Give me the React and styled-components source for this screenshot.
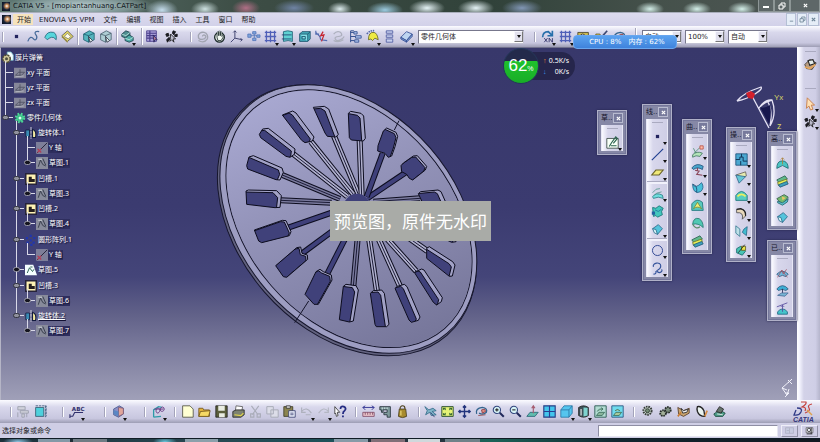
import React from 'react';
import styled, { createGlobalStyle, css } from 'styled-components';

const Global = createGlobalStyle`
  * { box-sizing: border-box; }
  body { margin: 0; font: 7px/10px "DejaVu Sans", "Noto Sans CJK SC", sans-serif; color: #1c1c26; }
  button, input, select { font: inherit; color: inherit; margin: 0; padding: 0; border: 0; background: none; }
  ul { list-style: none; margin: 0; padding: 0; }
`;

/* ---------- small drawings, all on a 16 x 16 grid ---------- */
const N = '#23245e';
const shapes = {
  point: <rect x="6" y="6" width="4" height="4" fill={N} />,
  curve: <path d="M1 14C3 8 6 8 8 11s6-1 3-5 1-5 4-4" fill="none" stroke="#456999" strokeWidth="1.5" />,
  surface: <path d="M1 9Q4 1 12 3q4 2 3 9-3-4-6-3-3 1-5 3Z" fill="#58d6dc" stroke="#22657a" />,
  solid: <><path d="M1 7 8 1l7 7-7 6Z" fill="#e9dc5e" stroke="#555" /><path d="m4 8 4-4 4 4-3 3Z" fill="#fffbe5" stroke="#777" /><path d="m1 7 7 7v2L1 9Z" fill="#9a8a3d" /></>,
  cube: <><path d="M2 5 9 1l6 3v8l-7 3-6-3Z" fill="#55b4bd" stroke="#1c5f70" /><path d="m2 5 6 2 7-3M8 7v8" fill="none" stroke="#1c5f70" /><path d="m8 8 5 5-3 2Z" fill="#e8f8f6" stroke="#334" /></>,
  cubeGrey: <><path d="M2 5 9 1l6 3v8l-7 3-6-3Z" fill="#aecdd4" stroke="#49606e" /><path d="m2 5 6 2 7-3M8 7v8" fill="none" stroke="#49606e" /><path d="m8 8 5 5-3 2Z" fill="#e8f8f6" stroke="#334" /></>,
  cubes: <><path d="m1 5 5-4 5 2v5l-5 2-5-2Z" fill="#508f91" stroke="#173c49" /><path d="m5 10 5-4 5 3v4l-5 2-5-2Z" fill="#4eaaa5" stroke="#173c49" /><path d="m1 5 5 2 5-4M5 10l5 2 5-3" fill="none" stroke="#bde5df" /></>,
  table: <><path d="M2 1h12v13H2Z" fill="#a99fd8" stroke="#4a3f8b" /><path d="M2 4h12M2 7h12M2 10h12M6 1v13" stroke="#4a3f8b" strokeWidth="1.5" /><path d="m10 6 5 6-3 0-1 3Z" fill="#c07f96" stroke={N} /></>,
  pointer: <><path d="m7 5 6 6-3 0 1 4-3-3-2 2Z" fill="#bbc" stroke="#111" /><path d="M1 5l3-1 1 3-3 1ZM10 1l3 1-2 4-2-2ZM2 12l3-3 1 2-3 4ZM12 6l3-1v3h-3Z" fill="#1c1c28" stroke="#111" /></>,
  swirl: <path d="M8 8c0-3 5-2 4 1s-8 4-9 0S6 2 10 3s5 5 4 8M3 13c5 3 9 1 11-2" fill="none" stroke="#a1a4b0" strokeWidth="1.6" />,
  hand: <><circle cx="8" cy="9" r="6" fill="#e7eee8" stroke="#1b2a2a" strokeWidth="1.6" /><path d="M5 9V3q1-2 2 0v4-5q1-2 2 0v5-4q1-2 2 0v5l2-2q1 0 0 2l-3 5H6Z" fill="#f4faf4" stroke="#1b2a2a" /></>,
  axis: <path d="M6 1v9l9 2M6 10l-5 5M4 3l2-2 2 2M13 10l2 2-2 2" fill="none" stroke="#414470" strokeWidth="1.2" />,
  nodes: <path d="M1 5h4v4H1Zm6-3h4v3H7Zm0 8h4v3H7Zm5-4h4v3h-4ZM5 7h7M9 5v5" fill="#7fa4dc" stroke="#5275b7" />,
  grid: <path d="M3 1v14M8 1v14M13 1v14M1 3h14M1 8h14M1 13h14" stroke="#5060b8" strokeWidth="1.6" />,
  box: <><path d="M3 2q5-2 11 0v12q-5-2-11 0Z" fill="#5fd0d2" stroke="#1c5e73" /><path d="M1 6h12M1 11h12" stroke="#1d3f70" /></>,
  box3d: <><path d="M2 5 5 2h10v9l-3 3H2Z" fill="#46aebd" stroke="#174c66" /><path d="M2 5h10v9M12 5l3-3M5 8h4v3H5Z" fill="#83dfe6" stroke="#174c66" /></>,
  snap: <><path d="m1 3 5 5 1 4 8 1M1 1v4h4" fill="none" stroke="#536bb0" strokeWidth="1.4" /><path d="m10 2-3 5 4-1-3 8" fill="none" stroke="#c5222d" strokeWidth="1.5" /></>,
  ghost: <path d="M2 5c5-6 10-2 10 1S2 7 4 11s9 1 11-3M2 13c5 3 9 1 12-1" fill="none" stroke="#adb0bd" strokeWidth="1.5" />,
  treeIcon: <><path d="M2 1v14M2 3h4m-4 5h6m-6 5h5M2 1h4" stroke="#334f8f" strokeWidth="1.2" /><path d="M6 2h4v3H6Zm2 5h7v3H8Zm-1 5h5v3H7Z" fill="#a9bde9" stroke="#334f8f" /></>,
  bell: <><path d="M3 12Q3 2 10 3q4 1 5 9l-4-2-3 3-2-2Z" fill="#eeea42" stroke="#64641e" /><path d="M1 5q4-5 9-4" fill="none" stroke="#4f65a6" strokeWidth="2" strokeDasharray="2 1" /></>,
  stack: <path d="M4 1h8v3H4Zm0 5h8v3H4Zm0 5h8v4H4Z" fill="#c8d0ee" stroke="#4a589e" />,
  eraser: <><path d="m1 9 7-7 7 3-7 8Z" fill="#bdd4f0" stroke="#344c92" /><path d="m1 9 7 4v2L1 11Zm7 4 7-8v3l-7 7Z" fill="#7a9bd1" stroke="#344c92" /></>,
  rotXY: <><path d="M2 9q0-7 7-7l4 4m1-5v6H8" fill="none" stroke="#276faa" strokeWidth="2" /><path d="m4 10 4 5m0-5-4 5m6 0v-5l4 5v-5" stroke={N} fill="none" /></>,
  camera: <><path d="M1 3h13v10H1Z" fill="#c9b952" stroke="#443d28" /><circle cx="7" cy="8" r="3" fill="#fff" stroke="#222" /></>,
  folderPen: <><path d="M1 5h5l1 2h7v7H1Z" fill="#e8d257" stroke="#59501f" /><path d="m15 1-8 9" stroke="#3c4772" strokeWidth="2" /></>,
  sketch: <><path d="M1 3h14v12H1Z" fill="#f7fff7" stroke="#31433c" /><path d="m4 13 3-5 5-7 2 2-5 6M6 12h7" fill="none" stroke="#2a624d" strokeWidth="1.4" /></>,
  line: <path d="M1 15 15 1" stroke="#203f91" strokeWidth="1.4" />,
  plane: <path d="m1 11 5-6h9l-5 6Z" fill="#f0e878" stroke="#6b642b" strokeWidth="1.3" />,
  sweep: <><path d="M2 12q4-6 12-2l1 4q-6-3-12 0Z" fill="#6fdede" stroke="#287c85" /><path d="M2 7q4-6 9-5M4 10q2-3 9-4" fill="none" stroke="#53968d" /></>,
  patch: <><path d="m2 3 4 1 4-3 5 3-2 4 1 4-6 3-2-2-3 1Z" fill="#42c7bd" stroke="#146e70" /><path d="m5 6 4 2 4-3" fill="none" stroke="#226aa1" /><path d="M1 8h4v4H1Z" fill="#2262a2" /></>,
  fold: <><path d="m2 7 7-5 5 5-6 7Z" fill="#55c4dc" stroke="#286687" /><path d="m2 7 4 1 2 6-4-2Z" fill="#d6f6f8" stroke="#286687" /></>,
  circle: <circle cx="8" cy="8" r="6.2" fill="none" stroke="#334a94" strokeWidth="1.2" />,
  spiral: <path d="M3 6c-2-5 9-7 9-1S5 9 8 12s7-1 5-3M3 15q4 0 3-4" fill="none" stroke="#34539b" strokeWidth="1.4" />,
  extrude: <><path d="M2 12q5-5 12-2l-3 4q-5-2-9 1Z" fill="#b2e4b8" stroke="#417460" /><path d="m4 10 7-7M3 4l3 6" stroke="#4b8c6f" fill="none" /><path d="M11 1h4v4h-4Z" fill="#ffbba9" stroke="#b85044" /></>,
  revolve: <><path d="M1 6Q7-1 15 4l-1 4Q8 4 3 8Z" fill="#4aa6cc" stroke="#214f7a" /><path d="m5 9 5 1-3 4 7 1M8 6v4" fill="none" stroke="#8b4659" strokeWidth="1.3" /></>,
  bowl: <><path d="M2 4q4 6 11-2 4 6-1 11-5 3-8-1Q2 9 2 4Z" fill="#49bfd9" stroke="#215f88" /><path d="M2 4q6 1 5 10" fill="none" stroke="#1b456c" /></>,
  offset: <><path d="M1 14V6q6-8 13-2l1 10Z" fill="#59c9bd" stroke="#197177" /><path d="m3 12 5-8 5 8q-5-4-10 0Z" fill="#f1ed75" stroke="#71863a" /></>,
  dome: <><path d="M2 9q1-9 8-7 5 3 5 11-6-6-13-4Z" fill="#50c8b3" stroke="#24766e" /><path d="M2 9q4 7 9 3" fill="none" stroke="#5a8a68" strokeWidth="1.5" /></>,
  layers: <><path d="m1 6 10-5 3 4-10 5Z" fill="#62b98c" stroke="#285f4d" /><path d="m2 9 11-4 1 4-11 4Z" fill="#e9ee55" stroke="#68702b" /><path d="m3 12 10-4 2 3-10 4Z" fill="#3fa1be" stroke="#1f5878" /></>,
  join: <><path d="M1 1h14v14H1Z" fill="#4aa7d0" stroke="#1a4f78" /><path d="M1 8h5V5h4v5h5M8 1v4M7 10v5" fill="none" stroke="#123658" strokeWidth="1.2" /></>,
  split: <><path d="m1 5 12-4 1 5-8 4Z" fill="#e5eab0" stroke="#635e57" /><path d="M1 5 13 7l-8 8Z" fill="#66c6d5" stroke="#32658d" /></>,
  boundary: <><path d="M1 14V8q7-10 14 0v6Z" fill="#57cdbf" stroke="#197177" /><path d="M3 9q5-5 10 0" fill="none" stroke="#ecee5e" strokeWidth="2" /></>,
  fillet: <><path d="M2 3Q13 0 13 11l-4 4Q11 6 2 7Z" fill="#e8d8bb" stroke="#49494c" /><path d="m2 3 5-1q7 2 6 9" fill="none" stroke="#222" strokeWidth="1.5" /></>,
  mirror: <><path d="m1 10 5 4V5L1 1Z" fill="#bde0e7" stroke="#377990" /><path d="m9 9 5 4 1-11-4 3Z" fill="#43bdd0" stroke="#276788" /></>,
  extrap: <><path d="m2 7 5-3 6 6-4 5-7-3Z" fill="#49c4b4" stroke="#13686b" /><path d="M8 4h5v5H8Z" fill="#eae44a" stroke="#5d5b20" /><path d="m4 12 8-10" stroke="#222" /></>,
  bridge: <><path d="M1 14q0-8 5-9h4q5 2 5 9l-4-2q-3-3-6 0Z" fill="#4bc4c3" stroke="#1c676f" /><path d="M8 1v8M6 3l2-2 2 2" stroke="#a9803a" fill="none" /></>,
  wrap: <><path d="m1 7 9-5 5 3-7 9Z" fill="#76bb70" stroke="#315b43" /><path d="m2 10 6 2 7-5-1 4-6 4-6-3Z" fill="#59bfc9" stroke="#24636f" /><path d="m7 4 5 2-4 3Z" fill="#e9c466" /></>,
  hair: <><path d="M1 10q7-7 14 0l-3 3q-4-3-8 0Z" fill="#6fbce0" stroke="#2b557c" /><path d="m2 14 5-9 2 5 4-6M7 5l7 9" fill="none" stroke="#9f5868" /></>,
  umbrella: <><path d="M1 6q7-8 14 0l-3 2q-4-3-9 0Z" fill="#3cadd4" stroke="#28587b" /><path d="M8 6v7" stroke="#202850" /><path d="m2 14 5-3h8l-4 4Z" fill="#77b5d4" stroke="#486b96" /></>,
  lift: <><path d="M2 12q6-7 12 0v3H2Z" fill="#46c4cb" stroke="#1e6682" /><path d="m1 6 13-5M8 4v8M6 6l2-2 2 2" fill="none" stroke="#52489b" /></>,
  draft: <path d="M1 2h9v4H1Zm3 5h10v3H4Zm2 4h3v4H6ZM1 9v6M12 10v5" fill="#d0d1db" stroke="#999caa" />,
  frame: <><path d="M2 3h10v11H2Z" fill="#4ed0dc" stroke="#32566c" /><path d="M2 1h13v13M14 1v14" stroke="#365478" fill="none" strokeDasharray="3 1" /></>,
  analysis: <><path d="m2 5 7-4 5 3v7l-6 4-6-3Z" fill="#8c8fc5" stroke="#46598e" /><path d="m8 3 6 1v7l-6 3Z" fill="#e1a59a" stroke="#7e5a77" /><path d="m2 6 6 2v6l-6-3Z" fill="#5a87c4" /></>,
  constr: <><path d="M2 15V6l6-4 4 1M2 15l9-1" fill="none" stroke="#2d9ba8" strokeWidth="1.6" /><path d="M5 7c0-4 4-4 5-1s5 2 5-1-4-4-5 1-5 5-5 1M3 5h11" fill="none" stroke="#683a84" strokeWidth="1.2" /></>,
  file: <path d="M2 1h9l4 4v10H2Z" fill="#ffffd3" stroke="#4b4c3c" />,
  folder: <><path d="M1 4h5l1 2h7v8H1Z" fill="#e4b23b" stroke="#6c5119" /><path d="m3 8 12-1-2 7H1Z" fill="#f6d964" stroke="#6c5119" /></>,
  save: <><path d="M1 1h14v14H1Z" fill="#5b5e3c" stroke="#222" /><path d="M4 1h8v6H4Zm1 9h7v5H5Z" fill="#e9ece2" /></>,
  print: <><path d="m5 1 8 1-1 6H4Z" fill="#fff" stroke="#555" /><path d="m1 8 4-2h10v6l-4 3H1Z" fill="#7d8272" stroke="#222" /><path d="m3 12 8 1 3-3" stroke="#e1d448" fill="none" strokeWidth="1.5" /></>,
  cut: <path d="m3 1 8 11M12 1 4 12M2 11h4v4H2Zm8 0h4v4h-4Z" fill="none" stroke="#a9acb8" strokeWidth="1.4" />,
  copy: <path d="M1 2h8v9H1Zm5 4h9v9H6Z" fill="#dcdde8" stroke="#a9acb8" strokeWidth="1.2" />,
  paste: <><path d="M1 2h11v12H1Z" fill="#8b8450" stroke="#3a3924" /><path d="M4 1h5v3H4Z" fill="#ddd" stroke="#333" /><path d="M7 7h8v8H7Z" fill="#eff3ff" stroke="#353c6c" /><path d="M9 10h4m-4 2h4" stroke="#353c6c" /></>,
  undo: <path d="M2 8q6-7 12 2M2 3v6h5M7 12h6" fill="none" stroke="#aeb1bd" strokeWidth="1.4" />,
  redo: <path d="M14 8Q8 1 2 10m12-7v6H9" fill="none" stroke="#b4b7c3" strokeWidth="1.4" />,
  help: <><path d="m1 2 6 7H4l1 4-2 1-1-4-1 1Z" fill="#fff" stroke="#333" /><path d="M8 5q0-4 4-3 4 2 1 5-2 1-2 4m0 2v2" fill="none" stroke="#252c83" strokeWidth="2.2" /></>,
  measure: <><path d="M1 3h14M4 1 1 3l3 3M12 1l3 2-3 3" fill="none" stroke="#3a3c96" strokeWidth="1.2" /><path d="M1 9h14v5H1Z" fill="#eac4ca" stroke="#7c4862" /><path d="M4 9v3m3-3v3m3-3v3m3-3v3" stroke="#7c4862" /></>,
  caliper: <><path d="M1 2h13v13h-4v-3H6V9h4V6H5v3H3V6H1Z" fill="#7f9b9c" stroke="#222d36" /><path d="M4 3v2M7 3v2M10 3v2" stroke="#e8f0f0" /></>,
  weight: <><circle cx="8" cy="4" r="3" fill="none" stroke="#4a3e18" strokeWidth="1.3" /><path d="M4 5h8l1 9q-5 3-10 0Z" fill="#a88b2e" stroke="#453b1d" /><path d="M6 7v6" stroke="#ead576" strokeWidth="1.5" /></>,
  fly: <><path d="m1 2 5 4 5-2 4 3-5 1 5 4-6 1-2-4-5 3 2-5Z" fill="#7fb4c8" stroke="#2f6786" /><path d="m8 9 5 6" stroke="#303b72" /></>,
  fit: <><path d="M1 2h14v12H1Z" fill="#e5f377" stroke="#2f5433" strokeWidth="1.2" /><path d="m3 4 3 2M3 12l3-2m7-6-3 2m3 6-3-2M3 6V4h3m4 0h3v2M3 10v2h3m7-2v2h-3" fill="none" stroke="#144e25" /></>,
  pan: <path d="M8 1v14M1 8h14M6 3l2-2 2 2M6 13l2 2 2-2M3 6 1 8l2 2m10-4 2 2-2 2" fill="none" stroke="#22347c" strokeWidth="1.7" />,
  rotate: <><path d="M2 11Q0 4 9 3q7 1 5 6-4 4-9 1" fill="none" stroke="#34648d" strokeWidth="1.6" /><path d="m8 6 4-1 1 3-4 2Z" fill="#e08c83" stroke="#84373c" /><path d="m4 13 9-1" stroke="#914245" /></>,
  zoomIn: <><circle cx="6" cy="6" r="4.5" fill="#d6f3f6" stroke="#31447c" strokeWidth="1.3" /><path d="m9.5 9.500 5 5" stroke="#20295b" strokeWidth="2.4" /><path d="M4 6h4M6 4v4" stroke="#222" strokeWidth="1.3" /></>,
  zoomOut: <><circle cx="6" cy="6" r="4.5" fill="#d6f3f6" stroke="#31447c" strokeWidth="1.3" /><path d="m9.500 9.500 5 5" stroke="#20295b" strokeWidth="2.4" /><path d="M4 6h4" stroke="#222" strokeWidth="1.3" /></>,
  normal: <><path d="m1 14 4-5h10l-4 5Z" fill="#60bcae" stroke="#266374" /><path d="M9 10V2M7 4l2-3 2 3" fill="none" stroke="#a55b6e" strokeWidth="1.4" /></>,
  quad: <><path d="M1 1h14v14H1Z" fill="#43c5ed" stroke="#273e85" strokeWidth="1.4" /><path d="M8 1v14M1 8h14" stroke="#283e90" strokeWidth="1.4" /></>,
  iso: <><path d="M1 6 5 1h10v9l-4 5H1Z" fill="#55c5ee" stroke="#2875a4" /><path d="M1 6h10v9m0-9 4-5" fill="none" stroke="#2875a4" /></>,
  shade: <><path d="M2 3q6-4 12 0v10q-6 4-12 0Z" fill="#3b5057" stroke="#222" /><path d="M8 3q5 0 5 1v9l-5 1Z" fill="#7ed2ce" /><path d="M5 5v8" stroke="#eee" strokeWidth="1.4" /></>,
  swap: <><path d="M1 1h14v14H1Z" fill="#b3dcd2" stroke="#36635d" strokeWidth="1.2" /><path d="m3 13 3-4h7l-3 4ZM4 8q2-4 7-3M9 3l2 2-2 2" fill="#8ab59c" stroke="#356a58" /></>,
  swapBlue: <><path d="M1 1h14v14H1Z" fill="#70dbed" stroke="#36638d" strokeWidth="1.2" /><path d="m3 13 3-4h7l-3 4ZM5 7q3-3 6 0" fill="#a8c99b" stroke="#356a58" /></>,
  gear: <><circle cx="8" cy="7" r="5" fill="#cddbd1" stroke="#363c38" strokeWidth="2.4" strokeDasharray="2 1" /><circle cx="8" cy="7" r="2.500" fill="#718b74" stroke="#252d28" /></>,
  gears: <><circle cx="5" cy="10" r="3.500" fill="#a3b09a" stroke="#252c29" strokeWidth="2.200" strokeDasharray="2 1" /><circle cx="11" cy="6" r="3.500" fill="#7b8c7c" stroke="#252c29" strokeWidth="2.200" strokeDasharray="2 1" /></>,
  book: <><path d="m1 3 7 4 7-3v6l-7 4-6-3Z" fill="#c9a46f" stroke="#533a24" /><path d="m5 4 3 3 6-2-2 4-5 1Z" fill="#eee" stroke="#222" /><path d="m1 14 4-5" stroke="#c77c31" strokeWidth="2" /></>,
  lens: <><path d="M3 2q5-1 8 5l1 7q-7 0-9-6-1-4 0-6Z" fill="#eaf2ef" stroke="#222" strokeWidth="1.6" /><path d="m12 14 3-7" stroke="#d58c42" strokeWidth="2" /></>,
  teal: <><path d="M1 11q7-6 14-1l-3 4H3Z" fill="#4f9f8a" stroke="#174437" /><path d="M4 8 8 2l5 3-3 5Z" fill="#66736b" stroke="#222" /><path d="m5 11 7 1" stroke="#eee" /></>,
  wbench: <><path d="m1 8 6-6 8 4-5 8-7-1Z" fill="#b99d83" stroke="#34302e" /><path d="m5 3 6-1 2 5-6 2Z" fill="#e5ece9" stroke="#222" strokeWidth="1.3" /><path d="m1 11 6 2 7-5" fill="none" stroke="#e5a65d" strokeWidth="2" /></>,
  select: <path d="m4 1 9 9H9l2 5-3 1-2-5-3 3Z" fill="#ffe1b5" stroke="#c98350" strokeWidth="1.2" />,
  partRoot: <><path d="M7 0h5l3 4v7H7Z" fill="#f6ffff" stroke="#7fc5d0" /><circle cx="6" cy="9" r="5" fill="#cfc79b" stroke="#4f4c35" strokeWidth="2" strokeDasharray="3 1" /><circle cx="6" cy="9" r="2" fill="#51503f" /></>,
  datum: <><path d="M0 1h16v14H0Z" fill="#868799" /><path d="m2 11 4-4h8l-4 4ZM8 3v9" fill="none" stroke="#484b5c" /><path d="m2 13 11-1" stroke="#bec0c8" /></>,
  axisDim: <><path d="M0 0h16v16H0Z" fill="#7d7e99" /><path d="M1 15 15 1" stroke="#26263c" strokeWidth="1.3" /><path d="m2 9 5 5m0-5-5 5" stroke="#b03f58" strokeWidth="1.5" /></>,
  sketchDim: <><path d="M0 0h16v16H0Z" fill="#888b9b" /><path d="m3 13 3-9 3 6 4 2M9 2l4 9" fill="none" stroke="#323947" strokeWidth="1.2" /><path d="M3 3h5" stroke="#dce4e5" /></>,
  sketchOn: <><path d="M0 1h11l5 14H0Z" fill="#f5ffff" /><path d="m3 12 3-7 4 5 2-3M7 4h3" fill="none" stroke="#1f5748" strokeWidth="1.2" /></>,
  pocket: <><path d="M1 1h14v14H1Z" fill="#fff3b3" stroke="#26233a" strokeWidth="2" /><path d="M5 5h4v3h4v4H5Z" fill="#241e1e" /></>,
  shaft: <><path d="M1 4h5v9H1Z" fill="#3a8bb3" stroke="#111a3d" /><path d="M8 0v16" stroke="#fff" strokeDasharray="4 1" /><path d="M10 3q6 2 4 11h-4Z" fill="#f2e9a0" stroke="#111a3d" strokeWidth="1.5" /></>,
  body: <><circle cx="8" cy="8" r="5" fill="#33ba83" stroke="#4fd596" strokeWidth="4" strokeDasharray="2 2" /><circle cx="8" cy="8" r="2" fill="#d9fff0" /></>,
  pattern: <path d="M6 1h3v3H6ZM1 4h3v3H1Zm10 0h3v3h-3ZM2 10h3v3H2Zm8 0h3v3h-3ZM6 7h3v3H6Zm1 6h3v3H7Z" fill="#2036ae" />,
  compassWin: <><path d="M1 3h14v10H1Z" fill="#c7cbe0" stroke="#a2a5b8" /><path d="M8 4v9M3 8h4" stroke="#a2a5b8" /></>,
  power: <><path d="M2 3h12v9H2Z" fill="#e8ebf2" stroke="#333" /><circle cx="7" cy="7" r="3" fill="none" stroke="#222" strokeWidth="1.3" /><path d="M11 3v11M3 14h10" stroke="#222" strokeWidth="1.5" /></>,
};

const Svg = styled.svg`
  display: block;
  flex: none;
  overflow: visible;
  width: ${p => p.$s || 13}px;
  height: ${p => p.$s || 13}px;
`;
const Icon = ({ name, size }) => <Svg $s={size} viewBox="0 0 16 16" aria-hidden="true">{shapes[name]}</Svg>;

/* ---------- frame ---------- */
const Shell = styled.div`
  position: relative;
  min-height: 100vh;
  display: flex;
  flex-direction: column;
  overflow: hidden;
  background: #d2d1e6;
`;
const TitleBar = styled.header`
  height: 13px;
  display: flex;
  align-items: center;
  gap: 3px;
  padding-left: 2px;
  color: #10151a;
  background:
    radial-gradient(ellipse 75px 12px at 80px 6px, rgba(196,216,220,.9), rgba(150,175,178,.6) 70%, transparent),
    radial-gradient(ellipse 16px 10px at 162px 10px, #c4dcec, transparent),
    radial-gradient(ellipse 14px 8px at 205px 9px, #cfe2e2, transparent),
    radial-gradient(ellipse 14px 8px at 246px 8px, #b16f86, transparent),
    radial-gradient(ellipse 20px 8px at 294px 8px, #6f83a4, transparent),
    radial-gradient(ellipse 12px 7px at 340px 9px, #dfeef0, transparent),
    radial-gradient(ellipse 18px 8px at 385px 10px, #9ccbe0, transparent),
    radial-gradient(ellipse 18px 8px at 427px 8px, #e6f4f7, transparent),
    radial-gradient(ellipse 18px 8px at 476px 8px, #e6f4f7, transparent),
    radial-gradient(ellipse 20px 8px at 522px 8px, #8196b5, transparent),
    radial-gradient(ellipse 14px 7px at 650px 9px, #d5f0ea, transparent),
    radial-gradient(ellipse 14px 7px at 697px 9px, #d5f0ea, transparent),
    radial-gradient(ellipse 14px 7px at 742px 9px, #d5f0ea, transparent),
    linear-gradient(90deg, #5f7873, #3d4d45 30%, #31423a 60%, #45514b 80%, #4f5755);
  border-bottom: 1px solid #a9aebb;
`;
const AppBadge = styled.span`
  width: ${p => p.$w}px;
  height: 9px;
  flex: none;
  background: radial-gradient(circle at 60% 45%, #fff, #c38958 25%, #182338 55%, #070b18);
`;
const Title = styled.h1`
  margin: 0;
  flex: 1;
  font: inherit;
`;
const WinBtns = styled.div`
  display: flex;
  align-self: stretch;
  gap: ${p => p.$gap || 0}px;
`;
const WinBtn = styled.button`
  width: ${p => p.$w || 16}px;
  display: grid;
  place-items: center;
  ${p => p.$light
    ? css`color: #6d8496; background: #e5edf7; border: 1px solid #b4bfd4;`
    : css`color: #fff; background: rgba(110,120,124,.5); border: 1px solid #8d9696; border-top: 0;`}
`;
const MenuBar = styled.nav`
  height: 13px;
  display: flex;
  align-items: center;
  padding: 0 1px 0 2px;
  background: linear-gradient(#dcdbee, #d2d1e9);
`;
const Menus = styled.div`
  flex: 1;
  display: flex;
  gap: 9px;
  padding-left: 2px;
`;
const MenuItem = styled.button`
  white-space: nowrap;
  height: 11px;
  ${p => p.$on && css`background: #f5e3bd; padding: 0 2px 0 4px; margin-right: -3px;`}
`;
const bar = css`
  background: linear-gradient(#fbfbff, #d9d8ec 30%, #c8c7df 80%, #9d9db4);
`;
const Toolbar = styled.div`
  ${bar}
  height: ${p => p.$h}px;
  display: flex;
  align-items: center;
  white-space: nowrap;
`;
const Group = styled.div`
  display: flex;
  align-items: center;
  flex: none;
  margin-left: ${p => p.$ml || 0}px;
`;
const Sep = styled.span`
  width: 2px;
  height: ${p => p.$h || 17}px;
  flex: none;
  margin-left: ${p => p.$ml || 0}px;
  border-left: 1px solid #a3a3ba;
  border-right: 1px solid #fff;
`;
const ToolBtn = styled.button`
  position: relative;
  flex: none;
  width: ${p => p.$w || 17}px;
  height: 18px;
  display: grid;
  place-items: center;
  ${p => p.$drop && css`
    &::after {
      content: '';
      position: absolute;
      right: 0;
      bottom: 0;
      border: 2px solid transparent;
      border-top: 3px solid #111;
      border-bottom: 0;
    }
  `}
`;
const Tool = ({ n, w }) => {
  const drop = n.endsWith('+');
  const name = drop ? n.slice(0, -1) : n;
  return <ToolBtn type="button" $w={w} $drop={drop} aria-label={name}><Icon name={name} /></ToolBtn>;
};
const Tools = ({ items, ml, w }) => (
  <Group $ml={ml}>{items.split(' ').map((n, i) => <Tool key={i} n={n} w={w} />)}</Group>
);

const Combo = styled.label`
  display: flex;
  align-items: center;
  flex: none;
  width: ${p => p.$w}px;
  height: 14px;
  margin-left: ${p => p.$ml}px;
  background: #fff;
  border: 1px solid #77778c;
  border-right-color: #c3c3d4;
  border-bottom-color: #c3c3d4;
`;
const Select = styled.select`
  appearance: none;
  flex: 1;
  min-width: 0;
  padding-left: 2px;
  outline: 0;
`;
const Arrow = styled.span`
  width: 9px;
  height: 11px;
  margin-left: -9px;
  display: grid;
  place-items: center;
  pointer-events: none;
  background: #e2e1ee;
  border: 1px solid #f7f7ff;
  border-right-color: #777;
  border-bottom-color: #777;
  &::after { content: ''; border: 2px solid transparent; border-top: 3px solid #111; border-bottom: 0; }
`;
const Drop = ({ label, value, w, ml }) => (
  <Combo $w={w} $ml={ml}><Select aria-label={label}><option>{value}</option></Select><Arrow /></Combo>
);

const Middle = styled.div`
  flex: 1;
  display: flex;
  min-height: 353px;
`;
const Viewport = styled.main`
  position: relative;
  flex: 1;
  border-left: 1px solid #b5b5c6;
  border-top: 1px solid #70708c;
  background: linear-gradient(#38386b, #3b3b70 45%, #444579 65%, #626289 76%, #8282a2 88%, #a0a0b8);
`;
const SideBar = styled.aside`
  width: 23px;
  display: flex;
  flex-direction: column;
  align-items: center;
  padding: 4px 0 0 4px;
  background: linear-gradient(90deg, #fff, #f5f5ff 10%, #d3d2e8 30%, #cfcee6 80%, #b5b5cc);
`;
const Grip = styled.span`
  width: 11px;
  height: 1px;
  margin-top: ${p => p.$mt || 0}px;
  margin-bottom: ${p => p.$mb || 0}px;
  background: #aaaac0;
`;

/* ---------- specification tree ---------- */
const Tree = styled.nav`
  position: relative;
  width: 130px;
  padding-top: 2px;
  color: #fff;
  font-family: "Noto Sans", "Noto Sans CJK SC", sans-serif;
`;
const Item = styled.li`
  position: relative;
  ${p => p.$line && css`
    &:not(:last-child)::before {
      content: '';
      position: absolute;
      left: ${p.$line - 1}px;
      top: -4px;
      bottom: -7px;
      width: 1px;
      background: #d9d9e8;
    }
    &:last-child::before {
      content: '';
      position: absolute;
      left: ${p.$line - 1}px;
      top: -4px;
      height: 12px;
      width: 1px;
      background: #d9d9e8;
    }
  `}
`;
const Branch = styled.ul`
  & > ${Item}:nth-child(even) { margin-top: ${p => (p.$loose ? 1 : 0)}px; }
`;
const Row = styled.div`
  height: 15px;
  display: flex;
  align-items: center;
  padding-left: ${p => p.$pad}px;
  text-shadow: 1px 1px 1px #111133;
`;
const Joint = styled.span`
  position: relative;
  flex: none;
  width: 8px;
  height: 1px;
  margin-right: 1px;
  background: #d9d9e8;
`;
const Toggle = styled.button`
  position: absolute;
  left: -3px;
  top: -2px;
  width: 7px;
  height: 5px;
  border-radius: 3px;
  background: ${p => (p.$open ? '#8f909c' : '#15151f')};
  border: 1px solid ${p => (p.$open ? '#33343f' : '#9a9aa8')};
`;
const Name = styled.span`
  margin-left: 1px;
  white-space: nowrap;
  ${p => p.$box && css`background: #2e2e5e; padding: 0 1px; margin-left: 0;`}
  ${p => p.$active && css`text-decoration: underline;`}
`;
const pads = [1, 4, 15, 26];
const Node = ({ d = 1, icon, name, open, leaf, active, children }) => (
  <Item $line={d ? pads[d] + 1 : 0}>
    <Row $pad={pads[d]}>
      {d > 0 && <Joint>{!leaf && <Toggle type="button" $open={open} aria-label={name} />}</Joint>}
      <Icon name={icon} size={12} />
      <Name $box={d > 2} $active={active}>{name}</Name>
    </Row>
    {children && <Branch $loose={d === 1}>{children}</Branch>}
  </Item>
);

/* ---------- floating palettes ---------- */
const PaletteBox = styled.section`
  position: absolute;
  left: ${p => p.$x}px;
  top: ${p => p.$y}px;
  width: 30px;
  padding: 0 3px 3px;
  background: #8688a6;
  border: 1px solid #b0b1c8;
  box-shadow: 0 0 2px #22224a, inset 0 0 0 1px #74769a;
`;
const PaletteHead = styled.div`
  height: 14px;
  display: flex;
  align-items: center;
  justify-content: space-between;
  color: #16162a;
`;
const Close = styled.button`
  width: 10px;
  height: 10px;
  display: grid;
  place-items: center;
  border: 1px solid #b8bbd0;
  background: #777a9c;
  color: #fff;
`;
const PaletteBody = styled.div`
  display: flex;
  flex-direction: column;
  align-items: center;
  background: linear-gradient(90deg, #fafaff, #d8d7ec 30%, #cfcee5);
  border: 1px solid #e8e8f6;
  border-width: 0 1px;
  padding-top: 3px;
`;
const PaletteSep = styled.span`
  align-self: stretch;
  height: 3px;
  border-top: 1px solid #a9a9c0;
  background: #f1f1fb;
`;
const Cross = () => <Svg $s={5} viewBox="0 0 6 6" aria-hidden="true"><path d="m1 1 4 4m0-4L1 5" stroke="currentColor" strokeWidth="1.4" /></Svg>;
const Palette = ({ x, y, title, items }) => (
  <PaletteBox $x={x} $y={y}>
    <PaletteHead>{title}<Close type="button" aria-label="close"><Cross /></Close></PaletteHead>
    <PaletteBody>
      <Grip $mb={4} />
      {items.split(' ').map((n, i) => (n === '|' ? <PaletteSep key={i} /> : <Tool key={i} n={n} w={20} />))}
    </PaletteBody>
  </PaletteBox>
);

/* ---------- model ---------- */
const Part = styled.svg`
  position: absolute;
  left: 209px;
  top: 27px;
  width: 280px;
  height: 290px;
`;
const slots = [
  { b: '310,97 343,94 356,102 385,178 378,186 352,184 345,174', n: [372, 183, 445, 358] },
  { b: '217,120 248,108 258,114 312,186 307,198 285,203 275,196', n: [303, 200, 430, 358] },
  { b: '148,178 158,162 175,160 255,222 253,238 240,247 228,244 152,188', n: [250, 237, 412, 364] },
  { b: '110,272 117,246 130,242 216,279 220,292 210,315 198,314 113,282', n: [217, 300, 390, 372], k: 'dark' },
  { b: '108,348 115,345 200,347 214,362 210,397 195,398 110,388', n: [213, 376, 365, 383], k: 'dark' },
  { b: '133,465 217,436 228,437 243,470 238,482 155,503 146,498', n: [235, 458, 365, 413], k: 'blue' },
  { b: '197,572 260,518 272,516 276,535 292,540 293,553 230,607 220,605', n: [278, 534, 365, 470], k: 'blue' },
  { b: '318,590 330,583 340,590 364,600 366,615 325,688 312,688 285,658', n: [353, 594, 405, 492], k: 'blue' },
  { b: '400,634 408,628 438,632 445,645 430,738 418,741 388,734', n: [430, 634, 443, 490], k: 'dark' },
  { b: '481,655 490,647 515,645 523,655 537,748 530,755 499,755 495,748', n: [501, 650, 477, 490] },
  { b: '555,640 562,634 583,628 591,635 630,726 625,736 604,742 597,735', n: [570, 634, 505, 490] },
  { b: '613,592 635,582 642,585 697,668 694,680 680,690 670,682', n: [618, 588, 530, 490] },
  { b: '650,520 658,515 728,560 735,570 727,603 718,604 650,550', n: [652, 528, 595, 488] },
  { b: '660,440 700,430 742,480 738,500 725,502 700,490', n: [665, 450, 500, 420] },
  { b: '625,356 632,350 684,345 693,350 710,388 640,388', n: [630, 370, 490, 380], k: 'dark' },
  { b: '573,272 580,264 610,243 622,242 650,274 646,285 608,315 598,310 590,298 575,290', n: [588, 292, 472, 370], k: 'blue' },
  { b: '520,168 530,159 558,172 563,184 555,215 545,243 535,247 525,235 503,228 504,212', n: [518, 235, 470, 365], k: 'blue' },
  { b: '415,115 422,109 453,115 461,123 466,190 460,198 424,195 418,188', n: [449, 197, 455, 362] },
];
const Disc = () => (
  <Part viewBox="0 0 840 870" aria-hidden="true">
    <defs>
      <linearGradient id="face" x1="0" y1="0.300" x2="1" y2="0.500">
        <stop offset="0" stopColor="#a9a9d2" /><stop offset=".4" stopColor="#9494ba" /><stop offset="1" stopColor="#77779b" />
      </linearGradient>
      {slots.map((s, i) => <clipPath key={i} id={`slot${i}`}><polygon points={s.b} /></clipPath>)}
    </defs>
    <g stroke="#16162c" strokeWidth="3">
      <ellipse cx="411" cy="436" rx="457" ry="328" fill="#62627f" transform="rotate(49 411 436)" />
      <ellipse cx="415" cy="432" rx="453" ry="325" fill="#9d9dc2" transform="rotate(49 415 432)" />
      <ellipse cx="417" cy="431" rx="437" ry="308" fill="#8a8aae" transform="rotate(49 417 431)" />
    </g>
    <ellipse cx="417" cy="431" rx="435" ry="306" fill="url(#face)" transform="rotate(49 417 431)" />
    <path d="m567 137-14 28M296 678l-42 65" stroke="#14142a" strokeWidth="3" />
    {slots.map(({ n: [x1, y1, x2, y2], k }, i) => (
      <g key={i} fill="none">
        <path d={`M${x1} ${y1}L${x2} ${y2}`} stroke="#0c0c1e" strokeWidth="18" />
        <path d={`M${x1} ${y1}L${x2} ${y2}`} stroke={k === 'blue' ? '#3f407a' : k === 'dark' ? '#7a7a9e' : '#b0b0ce'} strokeWidth="12" />
        {k !== 'blue' && <path d={`M${x1} ${y1}L${x2} ${y2}`} stroke="#1b1b36" strokeWidth="3" />}
      </g>
    ))}
    <ellipse cx="441" cy="402" rx="42" ry="46" fill="#3e3f79" />
    {slots.map((s, i) => (
      <g key={i} strokeLinejoin="round">
        <g clipPath={`url(#slot${i})`}>
          <polygon points={s.b} fill="#a2a2c6" />
          <polygon points={s.b} fill="#40417a" stroke="#0c0c1e" strokeWidth="3" transform={s.k === 'blue' ? 'translate(-5 4)' : 'translate(-11 6)'} />
        </g>
        <polygon points={s.b} fill="none" stroke="#0c0c1e" strokeWidth="3" />
      </g>
    ))}
  </Part>
);
const Watermark = styled.p`
  position: absolute;
  left: 329px;
  top: 153px;
  width: 161px;
  height: 40px;
  margin: 0;
  padding-left: 4px;
  overflow: hidden;
  white-space: nowrap;
  background: #a9aba7;
  color: #fff;
  font: 17px/40px "Noto Sans CJK SC", sans-serif;
`;
const Compass = styled.svg`
  position: absolute;
  left: 734px;
  top: 37px;
  width: 52px;
  height: 46px;
  font: 9px "Liberation Sans", sans-serif;
`;
const MiniAxis = styled.svg`
  position: absolute;
  right: 3px;
  bottom: 2px;
  width: 14px;
  height: 20px;
`;
const NetWidget = styled.div`
  position: absolute;
  left: 502px;
  top: 0;
  display: flex;
  align-items: center;
  color: #fff;
  font-family: "Noto Sans", sans-serif;
`;
const Dial = styled.div`
  z-index: 1;
  width: 36px;
  height: 36px;
  border-radius: 50%;
  border: 1px solid #24385a;
  display: flex;
  align-items: baseline;
  justify-content: center;
  font: 17px/34px "Liberation Sans", sans-serif;
  background: linear-gradient(#232a4b 34%, #1fc22c 35%, #18ad27);
`;
const Percent = styled.small`font-size: 7px;`;
const Rates = styled.div`
  width: 54px;
  height: 28px;
  margin-left: -18px;
  padding: 3px 6px 0 22px;
  border-radius: 0 14px 14px 0;
  background: #26264c;
`;
const Rate = styled.div`
  display: flex;
  justify-content: space-between;
  line-height: 11px;
`;
const Dir = styled.span`color: ${p => (p.$up ? '#f08a3c' : '#3c9cf0')};`;
const CpuBadge = styled.div`
  position: absolute;
  left: 573px;
  top: 35px;
  width: 104px;
  height: 14px;
  padding-left: 4px;
  display: flex;
  align-items: center;
  justify-content: center;
  gap: 7px;
  border-radius: 4px;
  border: 1px solid #69a6ee;
  background: linear-gradient(#5ba2f0, #3f83dc);
  color: #fff;
`;

/* ---------- bottom ---------- */
const Spacer = styled.span`flex: 1;`;
const Logo = styled.svg`
  width: 28px;
  height: 22px;
  flex: none;
  font: italic bold 7px "Liberation Sans", sans-serif;
`;
const Status = styled.footer`
  height: 15px;
  display: flex;
  align-items: center;
  gap: 3px;
  padding: 0 2px;
  background: #cfcee5;
`;
const StatusText = styled.span`flex: 1;`;
const Command = styled.input`
  width: 22%;
  height: 12px;
  background: #fff;
  border: 1px solid #8e8ea4;
  border-right-color: #e7e7f1;
  border-bottom-color: #e7e7f1;
`;
const StatusBtn = styled.button`
  width: 17px;
  height: 12px;
  display: grid;
  place-items: center;
  border: 1px solid #eeeef8;
  border-right-color: #9090a5;
  border-bottom-color: #9090a5;
`;
const TaskBar = styled.div`
  height: 4px;
  border-top: 1px solid #101c25;
  background:
    linear-gradient(90deg, transparent 38px, #8399a7 38px 70px, #1e2d36 70px 73px, #6f7c84 73px 107px, transparent 107px 185px, #8ba0ab 185px 218px, transparent 218px 334px, #879ba8 334px 368px, #263540 368px 371px, #806f78 371px 405px, #263540 405px 408px, #cfd8dc 408px 440px, #263540 440px 445px, #6f8289 445px 480px, transparent 480px),
    radial-gradient(ellipse 15px 5px at 18px 3px, #8fc8e6, transparent),
    radial-gradient(ellipse 12px 5px at 165px 3px, #6ac9df, transparent),
    linear-gradient(90deg, #1c303a, #284852 25%, #1b545b 45%, #1b6257 60%, #132630 75%, #111820);
`;

export default function App() {
  return (
    <Shell>
      <Global />
      <TitleBar>
        <AppBadge $w={8} />
        <Title>CATIA V5 - [mopiantanhuang.CATPart]</Title>
        <WinBtns>
          <WinBtn type="button" aria-label="minimize"><Svg $s={6} viewBox="0 0 6 6"><path d="M0 4h6" stroke="currentColor" strokeWidth="2" /></Svg></WinBtn>
          <WinBtn type="button" aria-label="restore"><Svg $s={6} viewBox="0 0 6 6"><path d="M2 2V0h4v4H4M0 2h4v4H0Z" fill="none" stroke="currentColor" /></Svg></WinBtn>
          <WinBtn type="button" $w={30} aria-label="close"><Cross /></WinBtn>
        </WinBtns>
      </TitleBar>
      <MenuBar>
        <AppBadge $w={9} />
        <Menus>
          <MenuItem $on>开始</MenuItem>
          {['ENOVIA V5 VPM', '文件', '编辑', '视图', '插入', '工具', '窗口', '帮助'].map(m => <MenuItem key={m}>{m}</MenuItem>)}
        </Menus>
        <WinBtns $gap={1}>
          <WinBtn type="button" $light $w={10} aria-label="minimize part"><Svg $s={5} viewBox="0 0 6 6"><path d="M1 5h4" stroke="currentColor" /></Svg></WinBtn>
          <WinBtn type="button" $light $w={10} aria-label="restore part"><Svg $s={5} viewBox="0 0 6 6"><path d="M2 2V0h4v4H4M0 2h4v4H0Z" fill="none" stroke="currentColor" /></Svg></WinBtn>
          <WinBtn type="button" $light $w={11} aria-label="close part"><Cross /></WinBtn>
        </WinBtns>
      </MenuBar>
      <Toolbar $h={21}>
        <Sep $ml={2} $h={10} />
        <Tools ml={4} items="point curve surface solid" />
        <Sep $ml={1} /><Tools ml={1} items="cube cubeGrey" />
        <Sep $ml={2} /><Tools ml={1} items="cubes+" />
        <Sep $ml={5} /><Tools items="table" /><Tools ml={3} items="pointer" />
        <Sep $ml={10} $h={10} />
        <Tools ml={2} items="swirl hand axis nodes grid+ box+ box3d snap ghost treeIcon bell+ stack eraser+" />
        <Drop label="body" value="零件几何体" w={106} ml={3} />
        <Sep $ml={10} $h={10} />
        <Tools ml={2} w={18} items="rotXY+ grid+ camera folderPen rotate" />
        <Sep $ml={7} />
        <Drop label="color" value="自动" w={40} ml={5} />
        <Drop label="opacity" value="100%" w={40} ml={3} />
        <Drop label="line weight" value="自动" w={40} ml={3} />
      </Toolbar>
      <Middle>
        <Viewport>
          <Disc />
          <Tree>
            <Branch>
              <Node d={0} icon="partRoot" name="膜片弹簧">
                <Node leaf icon="datum" name="xy 平面" />
                <Node leaf icon="datum" name="yz 平面" />
                <Node leaf icon="datum" name="zx 平面" />
                <Node open icon="body" name="零件几何体">
                  <Node d={2} open icon="shaft" name="旋转体.1">
                    <Node d={3} leaf icon="axisDim" name="Y 轴" />
                    <Node d={3} icon="sketchDim" name="草图.1" />
                  </Node>
                  <Node d={2} open icon="pocket" name="凹槽.1"><Node d={3} icon="sketchDim" name="草图.3" /></Node>
                  <Node d={2} open icon="pocket" name="凹槽.2"><Node d={3} icon="sketchDim" name="草图.4" /></Node>
                  <Node d={2} open icon="pattern" name="圆形阵列.1"><Node d={3} leaf icon="axisDim" name="Y 轴" /></Node>
                  <Node d={2} icon="sketchOn" name="草图.5" />
                  <Node d={2} open icon="pocket" name="凹槽.3"><Node d={3} icon="sketchDim" name="草图.6" /></Node>
                  <Node d={2} open active icon="shaft" name="旋转体.2"><Node d={3} icon="sketchDim" name="草图.7" /></Node>
                </Node>
              </Node>
            </Branch>
          </Tree>
          <Watermark>预览图，原件无水印</Watermark>
          <Compass viewBox="0 0 52 46">
            <path d="M2 16Q8 8 26 2q2 2-6 7T2 16M16 9l18 34M24 23q6-9 13-8 5 14-2 26M37 15q-8 2-13 8M33 17q5 10 2 24" fill="none" stroke="#e5e2f4" strokeWidth="1.3" />
            <path d="M25 22q4 2 10-2 2 9-1 19Z" fill="#16164d" />
            <path d="m11 8 5-2 4 3-2 5-5-1Z" fill="#d2202c" />
            <text x="39" y="15" fill="#d8d465" fontSize="8">Yx</text>
            <text x="42" y="44" fill="#d8d465">z</text>
          </Compass>
          <MiniAxis viewBox="0 0 14 20"><path d="M11 2 2 10l5 7 2-6M8 2l4 4m0-5-4 4M2 10l5 2M5 15h4l-4 4" fill="none" stroke="#f1f1fa" /></MiniAxis>
          <NetWidget>
            <Dial>62<Percent>%</Percent></Dial>
            <Rates>
              <Rate><Dir $up>↑</Dir><span>0.5K/s</span></Rate>
              <Rate><Dir>↓</Dir><span>0K/s</span></Rate>
            </Rates>
          </NetWidget>
          <Palette x={596} y={62} title="草.." items="sketch+" />
          <Palette x={641} y={56} title="线.." items="point+ line+ plane+ | sweep+ patch fold+ | circle+ spiral+" />
          <Palette x={681} y={71} title="曲.." items="extrude+ revolve+ bowl+ offset dome layers" />
          <Palette x={725} y={79} title="操.." items="join+ split+ boundary+ fillet+ mirror+ extrap+" />
          <Palette x={766} y={83} title="高.." items="bridge layers wrap fold" />
          <Palette x={766} y={192} title="已.." items="hair umbrella lift" />
        </Viewport>
        <SideBar>
          <Grip $mb={3} /><Tool n="wbench" /><Grip $mt={15} $mb={5} />
          <Tool n="select+" /><Tool n="pointer+" />
        </SideBar>
      </Middle>
      <Toolbar $h={23}>
        <Sep $ml={10} $h={10} /><Tools ml={3} items="draft frame" />
        <Sep $ml={13} $h={10} />
        <Group $ml={4}>
          <ToolBtn type="button" $drop aria-label="text with leader">
            <Svg $s={15} viewBox="0 0 16 16"><text x="3" y="7" fontSize="6" fontWeight="bold" fill="#30306c">ABC</text><path d="M1 13h3l2-4h9M1 11v4" fill="none" stroke="#30306c" strokeWidth="1.2" /></Svg>
          </ToolBtn>
        </Group>
        <Sep $ml={19} $h={10} /><Tools ml={4} items="analysis+" />
        <Sep $ml={17} $h={10} /><Tools ml={4} items="constr+" />
        <Sep $ml={7} $h={10} /><Tools ml={3} items="file folder save print cut copy paste undo+ redo+ help" />
        <Sep $ml={6} $h={10} /><Tools ml={3} items="measure caliper weight" />
        <Sep $ml={7} $h={10} /><Tools ml={2} items="fly fit pan rotate zoomIn zoomOut normal quad iso+ shade+ swap swapBlue" />
        <Sep $ml={7} $h={10} /><Tools ml={3} w={18} items="gear gears book lens teal" />
        <Spacer />
        <Logo viewBox="0 0 28 22" role="img" aria-label="CATIA">
          <path d="M9 1h5q1 2-4 5 5 0 3 4M20 3q-5 1-3 4t-4 5" fill="none" stroke="#c3403c" strokeWidth="1.2" />
          <path d="M5 7q6 0 4 4t-7 3l2-5" fill="none" stroke="#303a86" strokeWidth="1.3" />
          <path d="m15 9 5 5" stroke="#dfa24e" strokeWidth="1.4" />
          <text x="1" y="21" fontSize="7" fill="#34347c">CATIA</text>
        </Logo>
      </Toolbar>
      <Status>
        <StatusText>选择对象或命令</StatusText>
        <Command aria-label="command" />
        <StatusBtn type="button" aria-label="power input"><Icon name="compassWin" size={9} /></StatusBtn>
        <StatusBtn type="button" aria-label="dialog"><Icon name="power" size={9} /></StatusBtn>
      </Status>
      <TaskBar />
      <CpuBadge><span>CPU : 8%</span><span>内存 : 62%</span></CpuBadge>
    </Shell>
  );
}
